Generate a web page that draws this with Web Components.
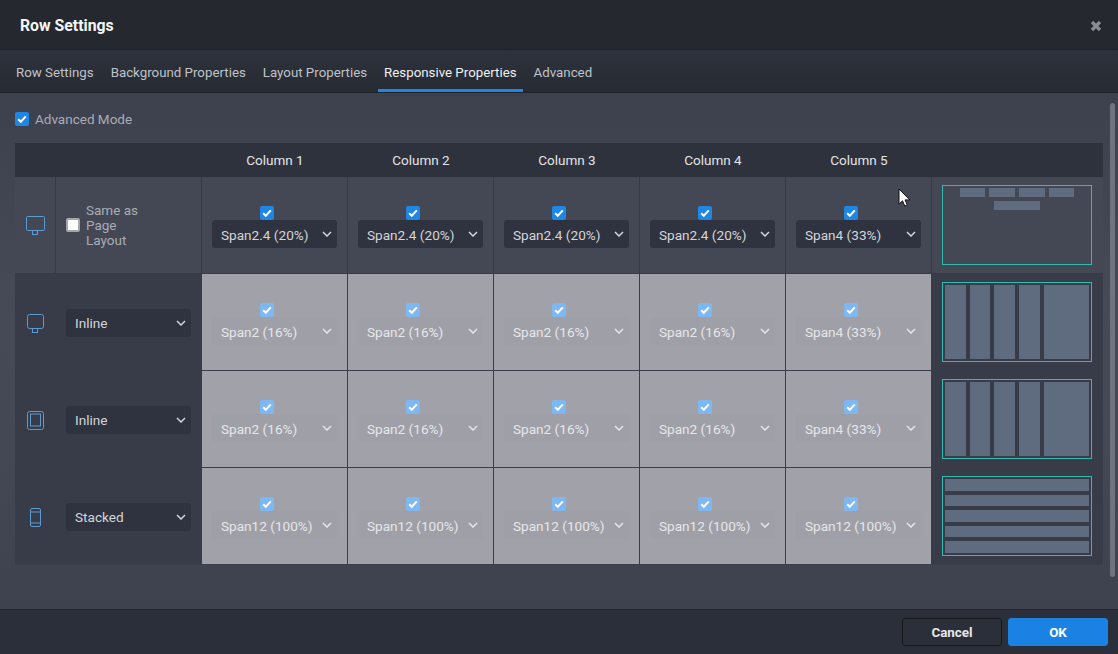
<!DOCTYPE html>
<html><head><meta charset="utf-8"><title>Row Settings</title>
<style>
html,body{margin:0;padding:0;width:1118px;height:654px;overflow:hidden;background:#3f4450;font-family:Roboto,"Liberation Sans",sans-serif}
</style></head><body>
<rs-dialog></rs-dialog>
<script>
const chevron='<svg width="10" height="6" viewBox="0 0 10 6"><path d="M1 1l4 4 4-4" fill="none" stroke="currentColor" stroke-width="1.5"/></svg>';
class RsCheck extends HTMLElement{
  connectedCallback(){
    const s=this.getAttribute('state')||'on';
    const r=this.attachShadow({mode:'open'});
    r.innerHTML=`<style>
    :host{display:block;width:14px;height:14px;box-sizing:border-box;border-radius:2px;flex:none}
    :host([state=on]){background:#1f86e6}
    :host([state=muted]){background:#7db8f2}
    :host([state=off]){background:#fff;border:2px solid #a4a6ac}
    svg{display:block;width:14px;height:14px}
    </style>${s==='off'?'':'<svg viewBox="0 0 14 14"><path d="M3.2 7.2l2.6 2.6 5-5.4" fill="none" stroke="#fff" stroke-width="2"/></svg>'}`;
  }
}
customElements.define('rs-check',RsCheck);
class RsSelect extends HTMLElement{
  connectedCallback(){
    const r=this.attachShadow({mode:'open'});
    r.innerHTML=`<style>
    :host{display:flex;align-items:center;justify-content:space-between;box-sizing:border-box;width:125px;height:28px;padding:1px 5px 0 9px;border-radius:3px;background:#2f333f;color:#d3d5da;font-size:13.6px;white-space:nowrap}
    :host([muted]){background:#9fa0a7;color:#e6e6ea}
    svg{display:block;margin-top:-1px}
    </style><slot></slot>${chevron}`;
  }
}
customElements.define('rs-select',RsSelect);
class RsDevice extends HTMLElement{
  connectedCallback(){
    const k=this.getAttribute('kind');
    const icons={
      monitor:'<rect x="3.5" y="2.5" width="18" height="14" rx="1"/><rect x="9.500" y="16.5" width="5" height="4"/>',
      monitor2:'<rect x="4.5" y="2.5" width="16" height="14" rx="2"/><rect x="9.500" y="16.5" width="5" height="4"/>',
      tablet:'<rect x="4.5" y="2.5" width="16" height="18" rx="2"/><rect x="7.500" y="5" width="10" height="12"/>',
      phone:'<rect x="7.500" y="2.5" width="10" height="18" rx="1.500"/><path d="M7.500 6h10M7.500 17h10"/>'
    };
    const r=this.attachShadow({mode:'open'});
    r.innerHTML=`<style>:host{display:block;width:24px;height:22px}svg{display:block}</style>
    <svg width="24" height="22" viewBox="0 0 24 22" fill="none" stroke="#5b9bd1" stroke-width="1">${icons[k]}</svg>`;
  }
}
customElements.define('rs-device',RsDevice);
class RsPreview extends HTMLElement{
  connectedCallback(){
    const k=this.getAttribute('kind');
    let inner='';
    if(k==='wrap'){inner=[25,26,26,25,46].map(w=>`<i style="width:${w}px"></i>`).join('')}
    if(k==='cols'){inner=[21,20,21,21,45].map(w=>`<i style="width:${w}px"></i>`).join('')}
    if(k==='rows'){inner='<i></i><i></i><i></i><i></i><i></i>'}
    const r=this.attachShadow({mode:'open'});
    r.innerHTML=`<style>
    :host{display:block;box-sizing:border-box;width:150px;height:80px;border:1px solid #2fbcae}
    div{box-sizing:border-box;height:100%;display:flex;gap:4px}
    i{display:block;background:#5f6c80}
    .cols{padding:2px}
    .rows{flex-direction:column;padding:2px}
    .rows i{flex:1}
    .wrap{flex-wrap:wrap;justify-content:center;align-content:flex-start;padding:2px}
    .wrap i{height:9px}
    </style><div class="${k}">${inner}</div>`;
  }
}
customElements.define('rs-preview',RsPreview);
class RsCell extends HTMLElement{
  connectedCallback(){
    const muted=this.hasAttribute('muted');
    const r=this.attachShadow({mode:'open'});
    r.innerHTML=`<style>
    :host{display:flex;flex-direction:column;box-sizing:border-box;padding:29px 0 0 10px;border-right:1px solid #363a45;border-bottom:1px solid #363a45}
    :host([muted]){background:#a0a1a9;border-color:#3a3e4a}
    rs-check{margin-left:48px}
    </style><rs-check state="${muted?'muted':'on'}"></rs-check><rs-select ${muted?'muted':''}><slot></slot></rs-select>`;
  }
}
customElements.define('rs-cell',RsCell);
class RsRow extends HTMLElement{
  connectedCallback(){
    const r=this.attachShadow({mode:'open'});
    r.innerHTML=`<style>
    :host{display:grid;grid-template-columns:41px 146px repeat(5,146px) 171px;height:97px}
    .icon{display:flex;align-items:center;justify-content:center;padding-right:1px;box-sizing:border-box}
    .lead{display:flex;align-items:center;padding-left:10px;box-sizing:border-box}
    .pv{padding:8px 0 0 10px;box-sizing:border-box}
    :host([first]) .icon,:host([first]) .lead,:host([first]) .pv{border-bottom:1px solid #363a45}
    :host([first]) .icon,:host([first]) .lead{border-right:1px solid #363a45}
    </style>
    <div class="icon"><slot name="icon"></slot></div>
    <div class="lead"><slot name="lead"></slot></div>
    <slot></slot>
    <div class="pv"><slot name="preview"></slot></div>`;
  }
}
customElements.define('rs-row',RsRow);
class RsSame extends HTMLElement{
  connectedCallback(){
    const r=this.attachShadow({mode:'open'});
    r.innerHTML=`<style>:host{display:flex;align-items:center;gap:6px;color:#a9acb4;font-size:13.5px;line-height:15px}</style>
    <rs-check state="off"></rs-check><span><slot></slot></span>`;
  }
}
customElements.define('rs-same',RsSame);
class RsTable extends HTMLElement{
  connectedCallback(){
    const r=this.attachShadow({mode:'open'});
    const cols=['Column 1','Column 2','Column 3','Column 4','Column 5'];
    r.innerHTML=`<style>
    :host{display:block;width:1088px;background:#383c49;border-radius:1px}
    .head{display:grid;grid-template-columns:187px repeat(5,146px) 171px;height:34px;background:#2e323d;color:#e2e4e8;font-size:13.5px;align-items:center;text-align:center}
    .first{display:block;background:#444854}
    </style>
    <div class="head"><span></span>${cols.map(c=>`<span>${c}</span>`).join('')}<span></span></div>
    <div class="first"><slot name="first"></slot></div>
    <slot></slot>`;
  }
}
customElements.define('rs-table',RsTable);
class RsTabs extends HTMLElement{
  connectedCallback(){
    const names=['Row Settings','Background Properties','Layout Properties','Responsive Properties','Advanced'];
    const active=+this.getAttribute('active');
    const r=this.attachShadow({mode:'open'});
    r.innerHTML=`<style>
    :host{display:flex;gap:5px;height:43px;box-sizing:border-box;padding-left:10px;background:linear-gradient(#2e323c,#262a32);border-bottom:1px solid #1f2228;flex:none}
    a{display:flex;align-items:center;padding:5px 6px 0;font-size:13.3px;color:#bfc2c8;height:42px;box-sizing:border-box;border-bottom:3px solid transparent;white-space:nowrap}
    a.on{color:#eef0f2;border-bottom-color:#1f86e6}
    </style>${names.map((n,i)=>`<a class="${i===active?'on':''}">${n}</a>`).join('')}`;
  }
}
customElements.define('rs-tabs',RsTabs);
class RsButton extends HTMLElement{
  connectedCallback(){
    const r=this.attachShadow({mode:'open'});
    r.innerHTML=`<style>
    :host{display:flex;align-items:center;justify-content:center;box-sizing:border-box;width:100px;height:28px;border-radius:3px;font-size:13.4px;font-weight:700;color:#e6e7ea;background:#2b2f39;border:1px solid #15171c}
    :host([primary]){background:#1a82e2;border-color:#1a82e2;color:#fff}
    </style><slot></slot>`;
  }
}
customElements.define('rs-button',RsButton);
class RsDialog extends HTMLElement{
  connectedCallback(){
    const r=this.attachShadow({mode:'open'});
    const row=(kind,leadHtml,label,preview,muted,first)=>{
      const m=muted?'muted':'';
      const cells=label.map(t=>`<rs-cell ${m}>${t}</rs-cell>`).join('');
      return `<rs-row ${first?'first slot="first"':''}><rs-device slot="icon" kind="${kind}"></rs-device><div slot="lead">${leadHtml}</div>${cells}<rs-preview slot="preview" kind="${preview}"></rs-preview></rs-row>`;
    };
    const s2=Array(4).fill('Span2 (16%)').concat('Span4 (33%)');
    r.innerHTML=`<style>
    :host{display:flex;flex-direction:column;width:1118px;height:654px;position:relative;font-family:Roboto,"Liberation Sans",sans-serif}
    header{flex:none;height:50px;box-sizing:border-box;display:flex;align-items:center;justify-content:space-between;padding:2px 16px 0 20px;background:#25282f;border-bottom:1px solid #1f2228}
    h1{margin:0;font-size:15.8px;font-weight:700;color:#f4f5f6}
    main{flex:1;position:relative;box-sizing:border-box;padding:0 15px;background:linear-gradient(#3c414d,#454a56 40%,#434854 70%,#3d424e);min-height:0}
    .adv{display:flex;align-items:center;gap:6px;height:50px;padding-top:1px;box-sizing:border-box;color:#a9acb4;font-size:13.5px}
    .bar{position:absolute;right:3px;top:10px;width:5px;height:474px;border-radius:3px;background:#6f737e}
    footer{flex:none;height:45px;box-sizing:border-box;display:flex;justify-content:flex-end;align-items:center;gap:6px;padding:0 10px 0 0;background:#2b2f39;border-top:1px solid #22252c}
    .cursor{position:absolute;left:898px;top:188px}
    </style>
    <header><h1>Row Settings</h1>
      <svg width="12" height="12" viewBox="0 0 12 12"><path d="M2 2l8 8M10 2l-8 8" stroke="#8a8c90" stroke-width="3.200"/></svg>
    </header>
    <rs-tabs active="3"></rs-tabs>
    <main>
      <div class="adv"><rs-check state="on"></rs-check><span>Advanced Mode</span></div>
      <rs-table>
        ${row('monitor','<rs-same>Same as<br>Page<br>Layout</rs-same>',['Span2.4 (20%)','Span2.4 (20%)','Span2.4 (20%)','Span2.4 (20%)','Span4 (33%)'],'wrap',false,true)}
        ${row('monitor2','<rs-select>Inline</rs-select>',s2,'cols',true)}
        ${row('tablet','<rs-select>Inline</rs-select>',s2,'cols',true)}
        ${row('phone','<rs-select>Stacked</rs-select>',Array(5).fill('Span12 (100%)'),'rows',true)}
      </rs-table>
      <div class="bar"></div>
    </main>
    <footer><rs-button>Cancel</rs-button><rs-button primary>OK</rs-button></footer>
    <svg class="cursor" width="14" height="20" viewBox="0 0 14 20"><path d="M1 1v15l3.500-3.200 2.300 5.200 2.500-1.100-2.300-5h4.800z" fill="#fff" stroke="#111" stroke-width="1"/></svg>`;
  }
}
customElements.define('rs-dialog',RsDialog);
</script>
</body></html>
